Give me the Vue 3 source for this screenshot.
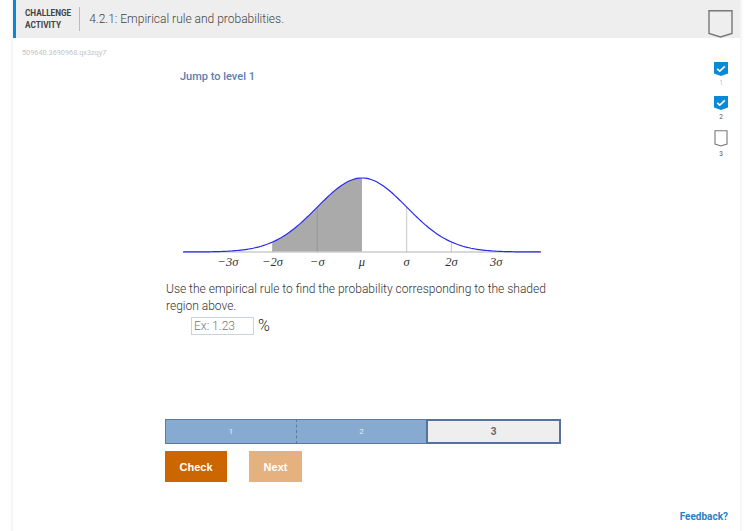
<template>
  <div class="page">
    <div class="activity">
      <header class="head">
        <div class="kind">CHALLENGE<br />ACTIVITY</div>
        <h1 class="title">4.2.1: Empirical rule and probabilities.</h1>
        <svg class="badge" width="25" height="28" viewBox="0 0 25 28">
          <path d="M1 .8H24V23.5L12.5 27L1 23.5Z" fill="none" stroke="#777" stroke-width="1.4" />
        </svg>
      </header>

      <div class="body">
        <div class="code">509640.3690968.qx3zqy7</div>
        <div class="columns">
          <main class="content">
            <a class="jump">Jump to level 1</a>

            <svg class="curve" width="380" height="110" viewBox="0 0 380 110">
              <path :d="shadePath" fill="#aaa" />
              <line x1="13" y1="87" x2="371" y2="87" stroke="#ccc" stroke-width="1.5" />
              <line
                v-for="t in ticks"
                :key="t.x"
                :x1="t.x"
                :x2="t.x"
                :y1="t.top"
                y2="87"
                stroke="#888"
                stroke-opacity="0.45"
              />
              <path :d="curvePath" fill="none" stroke="#2a2aee" stroke-width="1.2" />
              <text
                v-for="l in labels"
                :key="l.text"
                :x="l.x"
                y="101"
                text-anchor="middle"
                class="axis"
              >{{ l.text }}</text>
            </svg>

            <p class="prompt">Use the empirical rule to find the probability corresponding to the shaded region above.</p>
            <div class="answer">
              <input class="field" placeholder="Ex: 1.23" />
              <span class="percent">%</span>
            </div>

            <div class="levels">
              <div class="level done first">1</div>
              <div class="level done second">2</div>
              <div class="level current">3</div>
            </div>
            <div class="actions">
              <button class="btn check">Check</button>
              <button class="btn next">Next</button>
            </div>
          </main>

          <aside class="rail">
            <div v-for="n in 3" :key="n" class="step">
              <svg v-if="n < 3" width="14" height="14" viewBox="0 0 14 14">
                <path d="M0 0H14V11.5L7 14L0 11.5Z" fill="#0a8ad6" />
                <path d="M3.2 6.8L5.8 9.2L10.8 4.4" fill="none" stroke="#fff" stroke-width="1.6" />
              </svg>
              <svg v-else width="14" height="17" viewBox="0 0 14 17">
                <path d="M1 .7H13V14L7 16L1 14Z" fill="none" stroke="#777" stroke-width="1.1" />
              </svg>
              <span class="num">{{ n }}</span>
            </div>
          </aside>
        </div>
      </div>
      <a class="feedback">Feedback?</a>
    </div>
  </div>
</template>

<script setup>
const mean = 192
const sigma = 44.7
const base = 87
const peak = 74

const yAt = (x) => {
  const z = (x - mean) / sigma
  return base - peak * Math.exp(-0.5 * z * z)
}

const linePoints = (from, to) => {
  const pts = []
  for (let x = from; x < to; x += 2) {
    pts.push(x.toFixed(1) + ' ' + yAt(x).toFixed(2))
  }
  pts.push(to.toFixed(1) + ' ' + yAt(to).toFixed(2))
  return pts
}

const curvePath = 'M' + linePoints(13, 371).join('L')

const shadeFrom = mean - 2 * sigma
const shadePath = 'M' + shadeFrom + ' ' + base + 'L' + linePoints(shadeFrom, mean).join('L') + 'L' + mean + ' ' + base + 'Z'

const ticks = [-3, -2, -1, 1, 2, 3].map((k) => {
  const x = mean + k * sigma
  return { x, top: yAt(x) }
})

const labels = [
  { text: '−3σ', x: mean - 3 * sigma },
  { text: '−2σ', x: mean - 2 * sigma },
  { text: '−σ', x: mean - sigma },
  { text: 'μ', x: mean },
  { text: 'σ', x: mean + sigma },
  { text: '2σ', x: mean + 2 * sigma },
  { text: '3σ', x: mean + 3 * sigma },
]
</script>

<style>
html,
body {
  margin: 0;
  background: #fff;
}
</style>

<style scoped>
.page {
  width: 746px;
  height: 531px;
  overflow: hidden;
  font-family: Roboto, "Liberation Sans", sans-serif;
  background: #fff;
}
.activity {
  box-sizing: border-box;
  width: 727px;
  height: 531px;
  margin-left: 13px;
  box-shadow: 0 0 3px 1px #ececec;
  display: flex;
  flex-direction: column;
}
.head {
  height: 38px;
  flex: none;
  box-sizing: border-box;
  display: flex;
  align-items: center;
  background: #eee;
  border-left: 3px solid #0a8ad6;
  padding-left: 9px;
}
.kind {
  font-size: 8.2px;
  font-weight: 700;
  line-height: 12px;
  color: #444;
  padding-right: 8px;
  border-right: 1px solid #bbb;
  height: 24px;
}
.title {
  margin: 0 0 0 9px;
  font-size: 12px;
  font-weight: 300;
  color: #444;
  flex: 1;
}
.badge {
  margin-right: 7px;
  margin-top: 10px;
  flex: none;
}
.body {
  flex: 1;
  padding-top: 10px;
  display: flex;
  flex-direction: column;
}
.code {
  font-size: 7.3px;
  line-height: 10px;
  color: #c4c4c4;
  padding-left: 9px;
}
.columns {
  display: flex;
  flex: 1;
}
.content {
  width: 396px;
  margin-left: 152px;
}
.jump {
  display: block;
  margin-top: 12px;
  margin-left: 15px;
  font-size: 11px;
  line-height: 14px;
  font-weight: 500;
  color: #5a80b0;
}
.curve {
  display: block;
  margin-top: 81px;
  margin-left: 5px;
}
.axis {
  font-family: "Liberation Serif", serif;
  font-size: 12.5px;
  font-style: italic;
  fill: #333;
}
.prompt {
  margin: 6px 0 0 1px;
  width: 385px;
  font-size: 12px;
  line-height: 17px;
  font-weight: 300;
  color: #333;
}
.answer {
  display: flex;
  align-items: center;
  height: 19px;
  margin-top: 1px;
  margin-left: 26px;
}
.field {
  box-sizing: border-box;
  width: 63px;
  height: 18px;
  padding: 0 2px;
  border: 1px solid #c6d4dc;
  border-radius: 0;
  outline: none;
  font-family: inherit;
  font-size: 12px;
  font-weight: 300;
}
.field::placeholder {
  color: #777;
}
.percent {
  margin-left: 4px;
  font-size: 16px;
  font-weight: 300;
  color: #222;
}
.levels {
  display: flex;
  width: 396px;
  height: 25px;
  margin-top: 84px;
}
.level {
  box-sizing: border-box;
  display: flex;
  align-items: center;
  justify-content: center;
  font-size: 8px;
}
.done {
  background: #87abd0;
  color: #e2ecf4;
  border: 1px solid #5a7aa0;
}
.first {
  width: 131px;
  border-right: 0;
}
.second {
  width: 130px;
  border-left: 1px dashed #5a7aa0;
  border-right: 0;
}
.current {
  width: 135px;
  background: #eee;
  color: #666;
  font-size: 10px;
  font-weight: 700;
  border: 2px solid #56729a;
}
.actions {
  display: flex;
  gap: 22px;
  margin-top: 7px;
}
.btn {
  height: 31px;
  border: 0;
  padding: 0;
  font-family: "Liberation Sans", sans-serif;
  font-size: 11px;
  font-weight: 700;
  color: #fff;
}
.check {
  width: 62px;
  background: #cc6600;
}
.next {
  width: 53px;
  background: #e5b17f;
}
.rail {
  margin-left: auto;
  margin-right: 12px;
  margin-top: 4px;
  display: flex;
  flex-direction: column;
  gap: 8px;
}
.step {
  display: flex;
  flex-direction: column;
  align-items: center;
}
.step svg {
  display: block;
}
.num {
  font-size: 6.5px;
  line-height: 9px;
  margin-top: 3px;
  color: #555;
}
.step:first-child .num {
  color: #b4c4d4;
}
.feedback {
  align-self: flex-end;
  margin-right: 12px;
  margin-bottom: 8px;
  font-size: 10px;
  line-height: 12px;
  font-weight: 700;
  color: #2a80c4;
}
</style>
